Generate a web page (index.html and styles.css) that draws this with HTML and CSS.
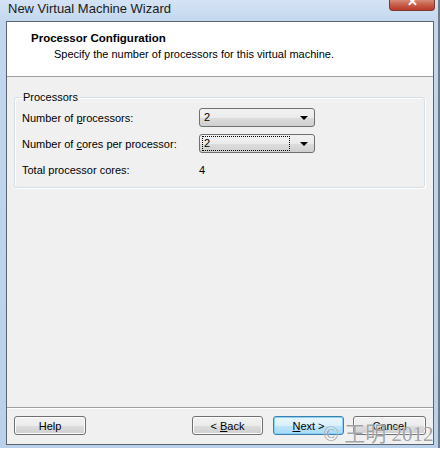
FILE: index.html
```html
<!DOCTYPE html>
<html lang="en">
<head>
    <meta charset="UTF-8">
    <title>New Virtual Machine Wizard</title>
    <link rel="stylesheet" href="styles.css">
</head>
<body>

    <div class="window">
        <div class="titlebar">
            <span class="title">New Virtual Machine Wizard</span>
            <div class="close-btn"><span>&#x2715;</span></div>
        </div>

        <div class="client">
            <div class="header">
                <div class="header-title">Processor Configuration</div>
                <div class="header-sub">Specify the number of processors for this virtual machine.</div>
            </div>

            <div class="content">
                <fieldset class="group">
                    <legend>Processors</legend>
                    <div class="row">
                        <label>Number of <u>p</u>rocessors:</label>
                        <div class="combo"><span class="combo-text">2</span><span class="arrow"></span></div>
                    </div>
                    <div class="row">
                        <label>Number of <u>c</u>ores per processor:</label>
                        <div class="combo"><span class="combo-text focused">2</span><span class="arrow"></span></div>
                    </div>
                    <div class="row">
                        <label>Total processor cores:</label>
                        <span class="value">4</span>
                    </div>
                </fieldset>
            </div>

            <div class="footer">
                <button class="btn">Help</button>
                <div class="spacer"></div>
                <button class="btn">&lt; <u>B</u>ack</button>
                <button class="btn default"><u>N</u>ext &gt;</button>
                <button class="btn cancel">Cancel</button>
            </div>
        </div>

        <div class="watermark">&copy; 王明 2012</div>
    </div>

</body>
</html>
```

FILE: styles.css
```css
* {
    margin: 0;
    padding: 0;
    box-sizing: border-box;
}

body {
    font-family: "Liberation Sans", Arial, sans-serif;
    font-size: 11px;
    color: #000;
    background: #ffffff;
    width: 440px;
    height: 450px;
    overflow: hidden;
}

.window {
    position: relative;
    width: 440px;
    height: 448px;
    display: flex;
    flex-direction: column;
    padding: 0 4px 3px 6px;
    background: linear-gradient(to bottom, #d4e3f4 0, #c2d7ee 22px, #b9d1ea 100%);
    border-right: 2px solid #6f7b88;
}

.titlebar {
    height: 21px;
    display: flex;
    justify-content: space-between;
    align-items: flex-start;
}

.title {
    font-family: "Liberation Sans", Arial, sans-serif;
    font-size: 13px;
    line-height: 15px;
    padding: 1px 0 0 2px;
    color: #1a1a1a;
}

.close-btn {
    width: 46px;
    height: 11px;
    margin-right: -1px;
    border: 1px solid #7a3a30;
    border-top: none;
    border-radius: 0 0 4px 4px;
    background: linear-gradient(to bottom, #d68a78 0, #c75b48 50%, #b83b28 100%);
    overflow: hidden;
    text-align: center;
}

.close-btn span {
    display: block;
    margin-top: -5px;
    color: #ffffff;
    font-size: 13px;
    font-weight: bold;
    line-height: 14px;
}

.client {
    flex: 1;
    display: flex;
    flex-direction: column;
    background: #f0f0f0;
    border: 1px solid #5a6470;
}

.header {
    height: 55px;
    background: #ffffff;
    border-bottom: 1px solid #a0a0a0;
    padding: 8px 0 0 24px;
}

.header-title {
    font-weight: bold;
    font-size: 11.5px;
    line-height: 16px;
}

.header-sub {
    padding-left: 23px;
    line-height: 16px;
}

.content {
    flex: 1;
    padding: 13px 8px 0 7px;
}

.group {
    border: 1px solid #d5dfe5;
    border-radius: 3px;
    box-shadow: inset 1px 1px 0 #ffffff, 1px 1px 0 #ffffff;
    padding: 1px 7px 8px 7px;
}

.group legend {
    padding: 0 1px;
    line-height: 15px;
}

.row {
    display: grid;
    grid-template-columns: 177px 116px;
    align-items: center;
    height: 19px;
    margin-top: 7px;
}

.row:first-of-type {
    margin-top: 2px;
}

.combo {
    height: 19px;
    display: flex;
    align-items: center;
    justify-content: space-between;
    border: 1px solid #707070;
    border-radius: 3px;
    background: linear-gradient(to bottom, #f2f2f2 0, #ebebeb 50%, #dddddd 51%, #cfcfcf 100%);
    padding: 1px 6px 1px 2px;
}

.combo-text {
    flex: 0 0 auto;
    height: 15px;
    line-height: 13px;
    padding: 0 1px;
    border: 1px dotted transparent;
}

.combo-text.focused {
    flex: 0 0 88px;
    border-color: #000000;
}

.arrow {
    width: 0;
    height: 0;
    border-left: 4px solid transparent;
    border-right: 4px solid transparent;
    border-top: 4px solid #000000;
}

.footer {
    display: flex;
    align-items: center;
    gap: 10px;
    border-top: 1px solid #a0a0a0;
    box-shadow: inset 0 1px 0 #ffffff;
    padding: 8px 7px 9px 7px;
}

.spacer {
    flex: 1;
}

.btn {
    width: 71px;
    height: 19px;
    font-family: "Liberation Sans", Arial, sans-serif;
    font-size: 11px;
    color: #000;
    border: 1px solid #707070;
    border-radius: 3px;
    background: linear-gradient(to bottom, #f2f2f2 0, #ebebeb 50%, #dddddd 51%, #cfcfcf 100%);
    box-shadow: inset 0 0 0 1px #fcfcfc;
}

.btn:first-child {
    width: 72px;
}

.btn.cancel {
    width: 73px;
    margin-left: -1px;
}

.btn.default {
    border-color: #3c7fb1;
    background: linear-gradient(to bottom, #eaf6fd 0, #d9f0fc 50%, #bee6fd 51%, #a7d9f5 100%);
    box-shadow: inset 0 0 0 1px #8ad1f5;
}

.watermark {
    position: absolute;
    left: 323px;
    top: 417px;
    font-family: "Liberation Serif", "Noto Sans CJK SC", serif;
    font-size: 21px;
    color: rgba(120, 120, 120, 0.7);
    text-shadow: 0 0 1px #ffffff;
    white-space: nowrap;
    pointer-events: none;
}
```
